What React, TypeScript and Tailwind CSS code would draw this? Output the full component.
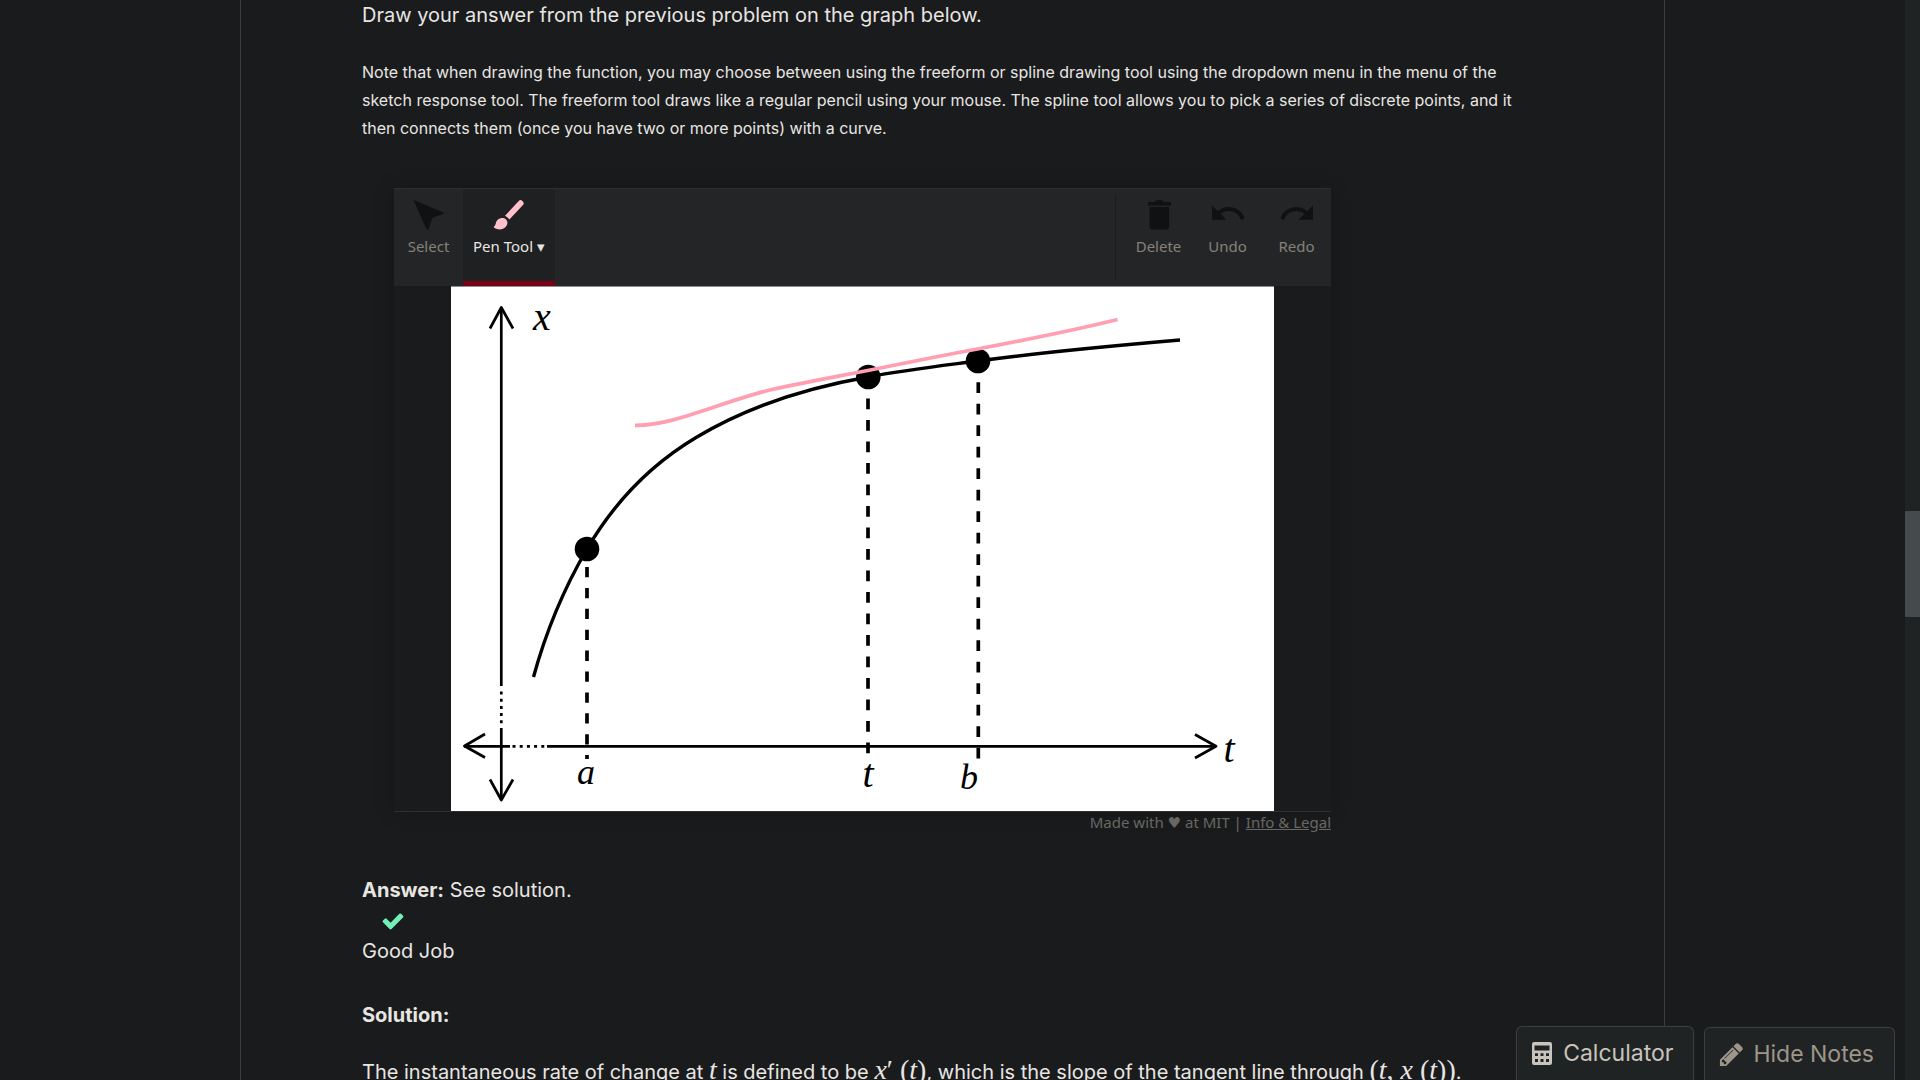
import React from "react";

type IconProps = { className?: string };

const SelectIcon = ({ className }: IconProps) => (
  <svg viewBox="0 0 32 32" className={className} fill="currentColor" aria-hidden="true">
    <path d="M1.6 1.2 L30.3 13.4 Q31.6 14.2 30.2 14.9 L20 18.6 Q19.4 18.9 19.1 19.6 L15.6 29.9 Q14.6 31.4 13.5 29.9 L1 2.2 Q.7 1 1.6 1.2z" />
  </svg>
);

const BrushIcon = ({ className }: IconProps) => (
  <svg viewBox="0 0 32 32" className={className} fill="currentColor" aria-hidden="true">
    <path d="M26.2 1.6q1.6-1.3 3.2.3 2.2 2.2.8 3.9L16.4 20.6Q15 18.2 12 16.7z" />
    <path d="M8.4 19.1c4.300-.8 7 3 5.700 6.500C12.700 30.200 6.300 32.300 1 28.500c-.5-.4-.4-.9.100-1.100 2.600-.9.300-6.900 7.300-8.300z" />
  </svg>
);

const TrashIcon = ({ className }: IconProps) => (
  <svg viewBox="0 0 32 32" className={className} fill="currentColor" aria-hidden="true">
    <path d="M5 3h6.500l1.500-1.800h6l1.500 1.800H28v3.500H5z" />
    <path d="M6.500 8h19.700v19.500q0 3-3 3H9.500q-3 0-3-3z" />
  </svg>
);

const UndoIcon = ({ className }: IconProps) => (
  <svg viewBox="2 3 20 20" className={className} fill="currentColor" aria-hidden="true">
    <path d="M12.5 8c-2.650 0-5.050.99-6.900 2.600L2 7v9h9l-3.620-3.620c1.390-1.160 3.160-1.880 5.120-1.880 3.540 0 6.550 2.310 7.600 5.500l2.370-.78C21.080 11.030 17.150 8 12.500 8z" />
  </svg>
);

const CheckIcon = ({ className }: IconProps) => (
  <svg viewBox="0 0 1792 1792" className={className} fill="currentColor" role="img" aria-label="Correct">
    <path d="M1671 566q0 40-28 68l-724 724-136 136q-28 28-68 28t-68-28l-136-136-362-362q-28-28-28-68t28-68l136-136q28-28 68-28t68 28l294 295 656-657q28-28 68-28t68 28l136 136q28 28 28 68z" />
  </svg>
);

const CalculatorIcon = ({ className }: IconProps) => (
  <svg viewBox="0 0 20 23" className={className} fill="currentColor" aria-hidden="true">
    <path
      fillRule="evenodd"
      d="M2 0h16q2 0 2 2v19q0 2-2 2H2q-2 0-2-2V2Q0 0 2 0zM2.500 3.500v5h15v-5zM3 11.300v2.700h3v-2.700zM8.500 11.300v2.700h3v-2.700zM14 11.300v2.700h3v-2.700zM3 17v3h3v-3zM8.500 17v3h3v-3zM14 17v3h3v-3z"
    />
  </svg>
);

const PencilIcon = ({ className }: IconProps) => (
  <svg viewBox="0 0 1792 1792" className={className} fill="currentColor" aria-hidden="true">
    <path d="M491 1536l91-91-235-235-91 91v107h128v128h107zm523-928q0-22-22-22-10 0-17 7l-542 542q-7 7-7 17 0 22 22 22 10 0 17-7l542-542q7-7 7-17zm-54-192l416 416-832 832h-416v-416zm683 96q0 53-37 90l-166 166-416-416 166-165q36-38 90-38 53 0 91 38l235 234q37 39 37 91z" />
  </svg>
);

const ToolButton = ({ icon, label }: { icon: React.ReactNode; label: string }) => (
  <button type="button" className="flex min-w-[69px] flex-col items-center gap-[5px] px-2 pt-2.5 text-[#84817b]">
    <span className="text-[#101112]">{icon}</span>
    <span className="text-[15px] leading-5">{label}</span>
  </button>
);

const Graph = () => (
  <svg
    viewBox="451 286 823 525"
    className="mx-auto block w-[823px] max-w-full bg-white"
    fill="none"
    stroke="#000"
    role="img"
    aria-label="Graph of x against t"
  >
    <path d="M451 286.500H1274" stroke="#8d8e8f" strokeWidth="1" />
    <g strokeWidth="2.700">
      <path d="M501.300 307V686M501.300 728V800M464 746.300H510M547 746.300H1216" />
      <path d="M490 328.500L501.300 307.500L513 328.500M490 779.500L501.300 800L513 779.500M485 734L464.500 746L485 757.500M1195 734.500L1216 746.300L1195 758" strokeLinejoin="round" />
      <path d="M501.300 691.500V725M512.500 746.300H545" strokeDasharray="3 4.200" />
    </g>
    <g strokeWidth="3.700">
      <path d="M587 567V759" strokeDasharray="10.300 10.600" />
      <path d="M868 398.500V754" strokeDasharray="10.700 10.800" />
      <path d="M978.300 382.300V759" strokeDasharray="10.700 10.800" />
      <path
        strokeWidth="3.400"
        d="M533.500 677C545 635 563 590 587 549C615 501 650 465 696.500 437.300C745 408 800 389 868 377C905 370 940 366 978 361C1040 352.500 1110 346 1180 340"
      />
    </g>
    <g fill="#000" stroke="none">
      <circle cx="587" cy="549" r="12.300" />
      <circle cx="868.300" cy="377" r="12.300" />
      <circle cx="978" cy="361" r="12.300" />
    </g>
    <path
      stroke="#ff9fb1"
      strokeWidth="3.700"
      d="M635 425.300C675 426 725 400 773 389.300C800 383 840 376 869 370.300C910 362 945 355 980 348.500C1025 340 1075 330 1117.500 319.500"
    />
    <g
      fill="#000"
      stroke="none"
      textAnchor="middle"
      className="font-['Liberation_Serif',serif] text-[40px] italic"
    >
      <text x="542" y="330">x</text>
      <text x="586" y="784" className="text-[36px]">a</text>
      <text x="868" y="787">t</text>
      <text x="969" y="789" className="text-[36px]">b</text>
      <text x="1229" y="762">t</text>
    </g>
  </svg>
);

const M = ({ children }: { children: React.ReactNode }) => (
  <span className="font-['Liberation_Serif',serif] text-[28px] leading-none">{children}</span>
);

export default function App() {
  return (
    <div className="flex h-screen overflow-hidden bg-[#1a1b1c] font-['Inter',sans-serif] text-[#e8e6e3]">
      <div className="relative min-w-0 flex-1 overflow-hidden">
        <main className="mx-auto h-full max-w-[1425px] overflow-hidden border-x border-[#3a3d3f] px-[121px] text-xl">
          <p className="leading-[30px]">Draw your answer from the previous problem on the graph below.</p>
          <p className="mt-7 text-base leading-7">
            Note that when drawing the function, you may choose between using the freeform or spline drawing tool using
            the dropdown menu in the menu of the sketch response tool. The freeform tool draws like a regular pencil
            using your mouse. The spline tool allows you to pick a series of discrete points, and it then connects them
            (once you have two or more points) with a curve.
          </p>

          <section className="mt-[46px] ml-8 max-w-[937px] font-['Noto_Sans',sans-serif]">
            <div className="border-b border-[#2d3032] shadow-[0_0_20px_rgba(0,0,0,0.2)]">
              <div className="flex h-[98px] border-t border-[#2d3032] bg-[#242527]">
                <ToolButton icon={<SelectIcon className="size-8" />} label="Select" />
                <button
                  type="button"
                  className="flex flex-col items-center gap-[5px] border-b-5 border-[#7a0014] bg-[#1f2021] px-2.5 pt-2.5"
                >
                  <span className="text-[#ffc0cb]">
                    <BrushIcon className="size-8" />
                  </span>
                  <span className="text-[15px] leading-5 whitespace-nowrap">Pen Tool ▾</span>
                </button>
                <div className="my-1.5 mr-2 ml-auto w-px bg-[#1b1c1e]" />
                <ToolButton icon={<TrashIcon className="size-8" />} label="Delete" />
                <ToolButton icon={<UndoIcon className="size-8" />} label="Undo" />
                <ToolButton icon={<UndoIcon className="size-8 -scale-x-100" />} label="Redo" />
              </div>
              <Graph />
            </div>
            <p className="text-right text-[15px] leading-5 text-[#696764]">
              Made with <span className="font-['DejaVu_Sans',sans-serif]">♥</span> at MIT |{" "}
              <a href="#legal" className="underline">
                Info &amp; Legal
              </a>
            </p>
          </section>

          <p className="mt-10 leading-[34px]">
            <strong>Answer:</strong> See solution.
          </p>
          <div className="ml-[19px] flex h-7 items-center text-[#73f0b5]">
            <CheckIcon className="size-6" />
          </div>
          <p className="leading-8">Good Job</p>
          <p className="mt-[31px] font-bold leading-[34px]">Solution:</p>
          <p className="mt-[23px] leading-[34px] whitespace-nowrap">
            The instantaneous rate of change at <M><i>t</i></M> is defined to be <M><i>x</i>′ (<i>t</i>)</M>, which is
            the slope of the tangent line through <M>(<i>t</i>, <i>x</i> (<i>t</i>))</M>.
          </p>
        </main>

        <div className="absolute right-2.5 bottom-0 flex items-end gap-2.5 text-[23px]">
          <button
            type="button"
            className="flex h-[54px] items-center gap-[11px] rounded-t-md border border-b-0 border-[#3c3f41] bg-[#202324] px-[15px] pr-5 text-[#c8c3bc]"
          >
            <CalculatorIcon className="h-[23px] w-5" />
            Calculator
          </button>
          <button
            type="button"
            className="flex h-[53px] items-center gap-2 rounded-t-md border border-b-0 border-[#3c3f41] bg-[#202324] px-[13px] pr-5 text-[#9e9689]"
          >
            <PencilIcon className="size-[27px]" />
            Hide Notes
          </button>
        </div>
      </div>
      <div className="flex w-[15px] flex-col bg-[#202324]">
        <div className="grow-[511]" />
        <div className="grow-[106] bg-[#454a4d]" />
        <div className="grow-[463]" />
      </div>
    </div>
  );
}
